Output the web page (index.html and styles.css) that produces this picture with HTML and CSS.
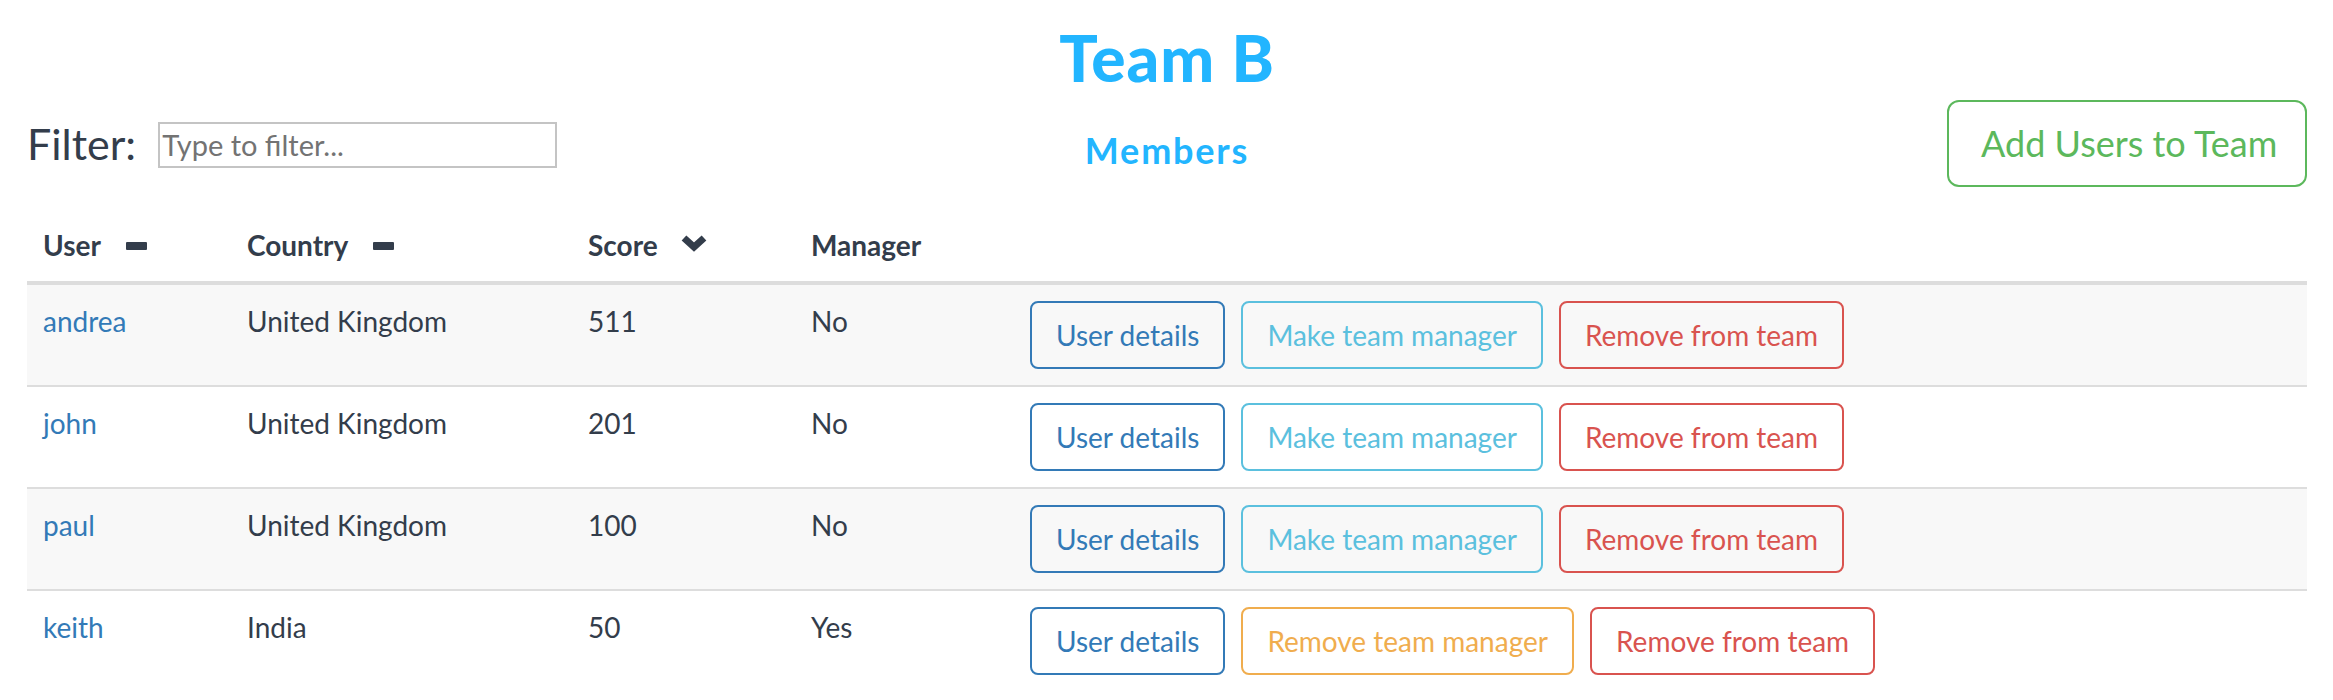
FILE: index.html
```html
<!DOCTYPE html>
<html>
<head>
<meta charset="utf-8">
<title>Team B</title>
<link rel="stylesheet" href="styles.css">
</head>
<body>
<div class="page">
  <h1 class="title">Team B</h1>
  <div class="toolbar">
    <div class="filter">
      <label class="filter-label" for="f">Filter:</label>
      <input id="f" class="filter-input" type="text" placeholder="Type to filter...">
    </div>
    <h4 class="members">Members</h4>
    <div class="toolbar-right">
      <button class="btn btn-lg btn-success">Add Users to Team</button>
    </div>
  </div>
  <table class="table">
    <thead>
      <tr>
        <th class="col-user">User<span class="sort-minus"></span></th>
        <th class="col-country">Country<span class="sort-minus"></span></th>
        <th class="col-score">Score<svg class="sort-chevron" viewBox="0 0 26 18" width="26" height="18"><polyline points="3,4 13,13 23,4" fill="none" stroke="currentColor" stroke-width="7" stroke-linejoin="miter"/></svg></th>
        <th class="col-manager">Manager</th>
        <th></th>
      </tr>
    </thead>
    <tbody>
      <tr>
        <td><a href="#">andrea</a></td>
        <td>United Kingdom</td>
        <td>511</td>
        <td>No</td>
        <td><div class="actions"><button class="btn btn-primary">User details</button><button class="btn btn-info">Make team manager</button><button class="btn btn-danger">Remove from team</button></div></td>
      </tr>
      <tr>
        <td><a href="#">john</a></td>
        <td>United Kingdom</td>
        <td>201</td>
        <td>No</td>
        <td><div class="actions"><button class="btn btn-primary">User details</button><button class="btn btn-info">Make team manager</button><button class="btn btn-danger">Remove from team</button></div></td>
      </tr>
      <tr>
        <td><a href="#">paul</a></td>
        <td>United Kingdom</td>
        <td>100</td>
        <td>No</td>
        <td><div class="actions"><button class="btn btn-primary">User details</button><button class="btn btn-info">Make team manager</button><button class="btn btn-danger">Remove from team</button></div></td>
      </tr>
      <tr>
        <td><a href="#">keith</a></td>
        <td>India</td>
        <td>50</td>
        <td>Yes</td>
        <td><div class="actions"><button class="btn btn-primary">User details</button><button class="btn btn-warning">Remove team manager</button><button class="btn btn-danger">Remove from team</button></div></td>
      </tr>
    </tbody>
  </table>
</div>
</body>
</html>
```

FILE: styles.css
```css
* { box-sizing: border-box; }

html, body {
  margin: 0;
  padding: 0;
  background: #ffffff;
}

body {
  font-family: "Lato", "Liberation Sans", sans-serif;
  font-size: 28px;
  line-height: 40px;
  color: #333d4b;
}

.page {
  padding: 0 26px 0 27px;
}

.title {
  margin: 22px 0 0 0;
  text-align: center;
  font-family: "Lato", "Liberation Sans", sans-serif;
  font-weight: 900;
  font-size: 64px;
  line-height: 72px;
  color: #22b5ff;
  letter-spacing: 1px;
}

.toolbar {
  display: grid;
  grid-template-columns: 1fr auto 1fr;
  align-items: center;
  margin-top: 6px;
  height: 87px;
}

.filter {
  display: flex;
  align-items: center;
}

.filter-label {
  font-size: 43px;
  line-height: 50px;
  color: #333d4b;
  margin-right: 22px;
}

.filter-input {
  width: 399px;
  height: 46px;
  border: 2px solid #c4c4c4;
  padding: 2px 2px;
  font-family: "Lato", "Liberation Sans", sans-serif;
  font-size: 29px;
  color: #333;
  background: #fff;
  margin-top: 2px;
}

.filter-input::placeholder {
  color: #737373;
}

.members {
  margin: 12px 0 0 0;
  font-size: 36px;
  line-height: 40px;
  font-weight: 700;
  color: #22b5ff;
  text-align: center;
  letter-spacing: 1.8px;
}

.toolbar-right {
  display: flex;
  justify-content: flex-end;
}

.btn {
  display: inline-block;
  font-family: "Lato", "Liberation Sans", sans-serif;
  font-size: 28px;
  line-height: 40px;
  padding: 12px 24px;
  border: 2px solid;
  border-radius: 8px;
  background: transparent;
  white-space: nowrap;
  cursor: pointer;
}

.btn-lg {
  font-size: 36px;
  line-height: 43px;
  padding: 20px 32px;
  border-radius: 12px;
  width: 360px;
}

.btn-success { color: #5cb85c; border-color: #5cb85c; }
.btn-primary { color: #337ab7; border-color: #337ab7; }
.btn-info { color: #5bc0de; border-color: #5bc0de; }
.btn-danger { color: #d9534f; border-color: #d9534f; }
.btn-warning { color: #f0ad4e; border-color: #f0ad4e; }

.table {
  width: 100%;
  border-collapse: collapse;
  border-spacing: 0;
  margin-top: 22px;
}

.table th,
.table td {
  padding: 16px;
  text-align: left;
  vertical-align: top;
  line-height: 40px;
}

.table th {
  font-weight: 700;
  border-bottom: 4px solid #dddddd;
  vertical-align: bottom;
}

.table td {
  border-top: 2px solid #dddddd;
}

.table tbody tr:nth-child(odd) {
  background: #f8f8f8;
}

.table tbody tr:first-child td {
  border-top: 0;
}

.col-user { width: 204px; }
.col-country { width: 341px; }
.col-score { width: 223px; }
.col-manager { width: 219px; }

.sort-minus {
  display: inline-block;
  width: 21px;
  height: 8px;
  background: #333d4b;
  border-radius: 1px;
  margin-left: 25px;
  vertical-align: 6px;
}

.sort-chevron {
  display: inline-block;
  margin-left: 23px;
  vertical-align: 4px;
  color: #333d4b;
}

a {
  color: #337ab7;
  text-decoration: none;
}

.actions {
  display: flex;
  gap: 16px;
}
```
